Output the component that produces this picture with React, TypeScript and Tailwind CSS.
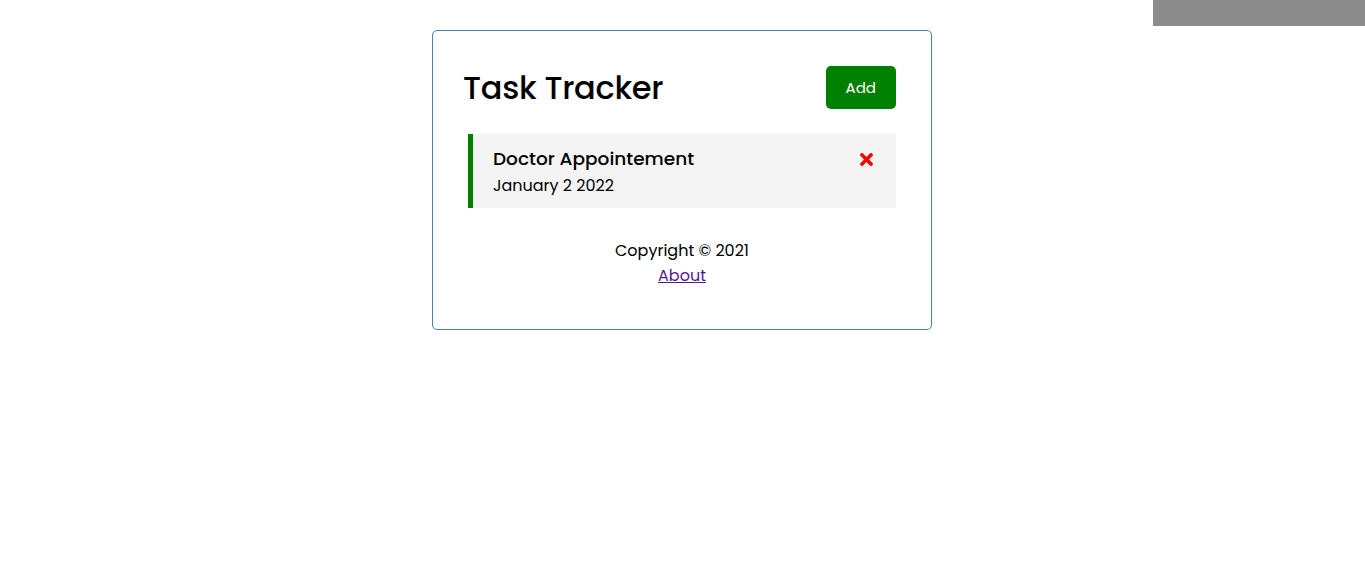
import { FaTimes } from 'react-icons/fa';

const tasks = [{ id: 1, text: 'Doctor Appointement', day: 'January 2 2022' }];

export default function App() {
  return (
    <div className="min-h-[583px] bg-white text-black font-['Poppins','Inter',sans-serif]">
      <div className="absolute right-0 top-0 h-[26px] w-[212px] bg-[#8c8c8c]" />
      <div className="h-[30px]" />
      <div className="ml-[432px] w-[500px] min-h-[300px] rounded-[5px] border border-[steelblue] p-[30px]">
        <header className="mb-5 flex items-center justify-between">
          <h1 className="text-[32px] font-medium leading-[48px] tracking-[-0.3px]">Task Tracker</h1>
          <button className="m-[5px] rounded-[5px] bg-[green] px-5 py-[10px] text-[15px] leading-[23px] text-white">
            Add
          </button>
        </header>
        {tasks.map((t) => (
          <div key={t.id} className="mx-[5px] border-l-[5px] border-[green] bg-[#f4f4f4] px-5 pb-[9px] pt-[11px]">
            <h3 className="flex items-center justify-between text-[18.5px] font-medium leading-[28px]">
              {t.text}
              <FaTimes className="text-[red] text-[19px]" />
            </h3>
            <p className="text-[16px] leading-[26px]">{t.day}</p>
          </div>
        ))}
        <footer className="mt-[30px] text-center text-[16px] leading-[25px]">
          <p>Copyright &copy; 2021</p>
          <a href="#" className="text-[#551a8b] underline">
            About
          </a>
        </footer>
      </div>
    </div>
  );
}
